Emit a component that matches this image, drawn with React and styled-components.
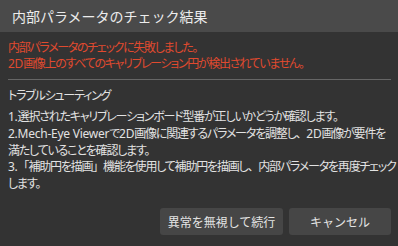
import React from 'react'
import styled, { createGlobalStyle } from 'styled-components'

const Global = createGlobalStyle`
  html, body { margin: 0; padding: 0; background: #333333; }
  body {
    font-family: "Noto Sans CJK JP", "Noto Sans", sans-serif;
    font-feature-settings: "palt";
  }
`

const Dialog = styled.div`
  width: 398px;
  height: 246px;
  background: #333333;
  display: flex;
  flex-direction: column;
  overflow: hidden;
`

const TitleBar = styled.div`
  height: 32px;
  background: #4a4a4a;
  display: flex;
  align-items: center;
  padding-left: 12px;
  color: #ececec;
  font-size: 14px;
  font-feature-settings: normal;
`

const Body = styled.div`
  flex: 1;
  display: flex;
  flex-direction: column;
  padding: 7px 7px 11px 8px;
`

const Lines = styled.div`
  font-size: 12px;
  line-height: 16px;
  white-space: nowrap;
  letter-spacing: ${p => (p.$error ? -1.3 : -1.2)}px;
  color: ${p => (p.$error ? '#e04a2f' : '#e2e2e2')};
  margin-top: ${p => p.$gap || 0}px;
`

// latin words keep a normal western face and spacing
const Latin = styled.span`
  font-family: "Noto Sans", sans-serif;
  letter-spacing: -0.25px;
`

// full-width punctuation, as in the original
const Wide = styled.span`
  font-feature-settings: normal;
`

const Divider = styled.hr`
  border: none;
  height: 1px;
  background: #666666;
  margin: 7px 0 0 0;
`

const Actions = styled.div`
  margin-top: auto;
  display: flex;
  justify-content: flex-end;
  gap: 6px;
`

const Button = styled.button`
  height: 27px;
  width: ${p => p.$w}px;
  border: none;
  border-radius: 3px;
  background: #464646;
  color: #e4e4e4;
  font-family: inherit;
  font-size: 12px;
  padding: 0;
  cursor: pointer;
`

export default function App() {
  return (
    <>
      <Global />
      <Dialog>
        <TitleBar>内部パラメータのチェック結果</TitleBar>
        <Body>
          <Lines $error>
            内部パラメータのチェックに失敗しました。<br />
            <Latin>2D</Latin>画像上のすべてのキャリブレーション円が検出されていません。
          </Lines>
          <Divider />
          <Lines $gap={7}>トラブルシューティング</Lines>
          <Lines $gap={5}>
            <Latin>1.</Latin>選択されたキャリブレーションボード型番が正しいかどうか確認します。<br />
            <Latin>2.Mech-Eye Viewer</Latin>で<Latin>2D</Latin>画像に関連するパラメータを調整し<Wide>、</Wide><Latin>2D</Latin>画像が要件を<br />
            満たしていることを確認します。<br />
            <Latin>3.</Latin><Wide>「</Wide>補助円を描画<Wide>」</Wide>機能を使用して補助円を描画し<Wide>、</Wide>内部パラメータを再度チェック<br />
            します。
          </Lines>
          <Actions>
            <Button $w={123}>異常を無視して続行</Button>
            <Button $w={102}>キャンセル</Button>
          </Actions>
        </Body>
      </Dialog>
    </>
  )
}
